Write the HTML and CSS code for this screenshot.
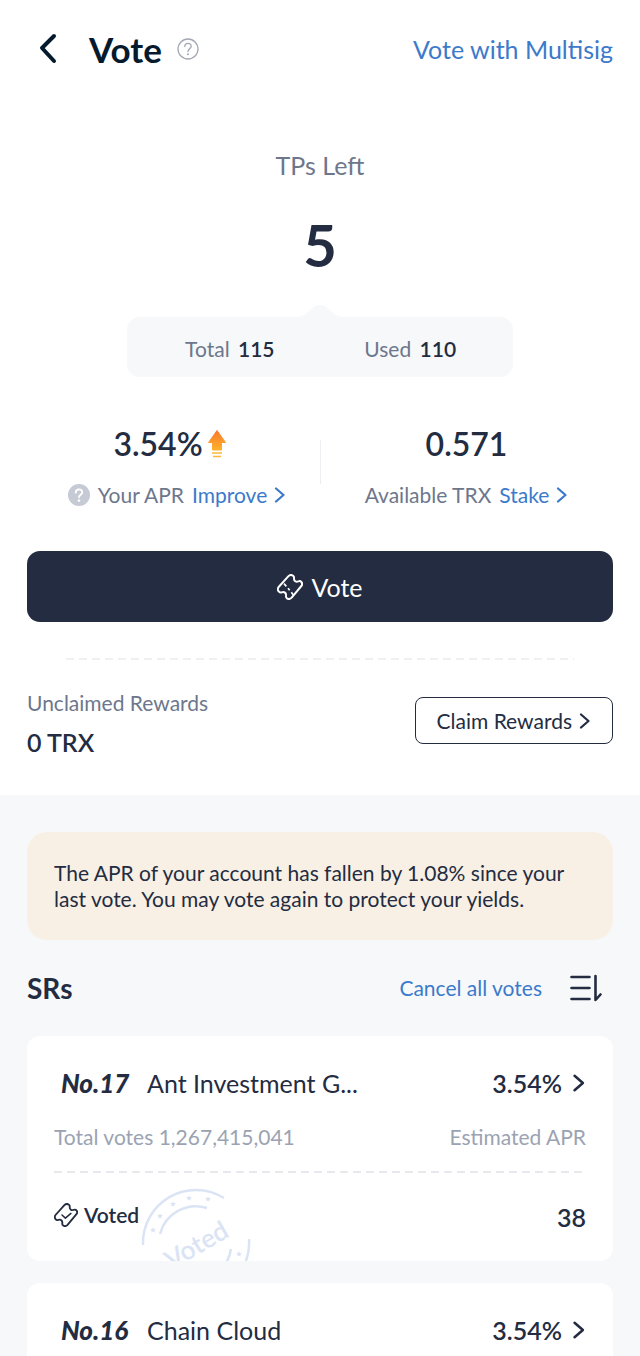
FILE: index.html
```html
<!DOCTYPE html>
<html lang="en">

<head>
    <meta charset="utf-8">
    <meta name="viewport" content="width=device-width, initial-scale=1">
    <title>Vote</title>
    <link rel="stylesheet" href="styles.css">
</head>

<body>
    <!-- shared icons -->
    <svg class="sprite" aria-hidden="true">
        <symbol id="chevron" viewBox="0 0 12 18">
            <path d="M2 2.500L9.500 9L2 15.500" fill="none" stroke="currentColor" stroke-width="2.300" stroke-linecap="round" stroke-linejoin="round" />
        </symbol>
        <symbol id="ticket" viewBox="0 0 78 78">
            <path d="M33 8Q41 -1 49 6Q52 9 51 14C51 21 57 25 64 22Q70 20 73 24Q78 30 73 36L44 71Q37 78 30 73Q26 70 27 65C28 57 22 52 14 55Q8 57 5 52Q0 46 5 39Z" fill="none" stroke="currentColor" stroke-width="6" stroke-linejoin="round" />
        </symbol>
        <symbol id="star" viewBox="0 0 10 10">
            <path d="M5 0L6.300 3.400L10 3.700L7.200 6.100L8.100 9.700L5 7.700L1.900 9.700L2.800 6.100L0 3.700L3.700 3.400Z" fill="currentColor" />
        </symbol>
    </svg>

    <main class="summary">
        <header class="header">
            <button class="back" type="button" aria-label="Back">
                <svg width="20" height="32" viewBox="0 0 20 32"><path d="M17 3L5 15L17 28" fill="none" stroke="currentColor" stroke-width="4" stroke-linecap="round" stroke-linejoin="round" /></svg>
            </button>
            <h1 class="title">Vote</h1>
            <button class="help" type="button" aria-label="Help">
                <svg width="22" height="22" viewBox="0 0 22 22" fill="none" stroke="currentColor">
                    <circle cx="11" cy="11" r="10" stroke-width="1.300" />
                    <path d="M7.800 8.500C7.800 4.400 14.200 4.400 14.200 8.300C14.200 10.700 11 10.600 11 13.500" stroke-width="1.300" stroke-linecap="round" />
                    <circle cx="11" cy="16.200" r="1" fill="currentColor" stroke="none" />
                </svg>
            </button>
            <a class="link multisig" href="#multisig">Vote with Multisig</a>
        </header>

        <section class="left-box">
            <p class="left-label">TPs Left</p>
            <p class="left-value">5</p>
            <svg class="notch" width="48" height="12" viewBox="0 0 48 12"><path d="M0 12C12 12 15 0 24 0C33 0 36 12 48 12Z" fill="currentColor" /></svg>
            <div class="totals">
                <p>Total <b>115</b></p>
                <p>Used <b>110</b></p>
            </div>
        </section>

        <section class="stats">
            <div class="stat stat-apr">
                <p class="stat-value">3.54%
                    <svg class="up" width="20" height="28" viewBox="0 0 20 28">
                        <defs>
                            <linearGradient id="fire" x1="0" y1="0" x2="0" y2="1">
                                <stop offset="0" stop-color="#f9792f" />
                                <stop offset="1" stop-color="#fdb22b" />
                            </linearGradient>
                        </defs>
                        <path d="M10 0.500L18.500 12.500H14.500V20H5.500V12.500H1.500Z" fill="url(#fire)" stroke="url(#fire)" stroke-linejoin="round" />
                        <path d="M5 23H15M6 26.500H14" stroke="#fbb83c" stroke-width="1.500" />
                    </svg>
                </p>
                <p class="stat-label">
                    <svg class="info" width="22" height="22" viewBox="0 0 22 22">
                        <circle cx="11" cy="11" r="11" fill="#c5cad4" />
                        <path d="M7.700 8.700C7.700 4.300 14.300 4.300 14.300 8.300C14.300 10.900 11 10.700 11 13.300" fill="none" stroke="#fff" stroke-width="1.800" stroke-linecap="round" />
                        <circle cx="11" cy="16.600" r="1.300" fill="#fff" />
                    </svg>
                    Your APR
                    <a class="link" href="#improve">Improve <svg class="chevron" width="12" height="18"><use href="#chevron" /></svg></a>
                </p>
            </div>
            <div class="stat">
                <p class="stat-value">0.571</p>
                <p class="stat-label">Available TRX
                    <a class="link" href="#stake">Stake <svg class="chevron" width="12" height="18"><use href="#chevron" /></svg></a>
                </p>
            </div>
        </section>

        <button class="vote-btn" type="button">
            <svg width="26" height="26" viewBox="0 0 78 78">
                <use href="#ticket" />
                <path d="M21 29L28 37M33 43L38 49M43 55L49 63" fill="none" stroke="currentColor" stroke-width="5" />
            </svg>
            Vote
        </button>

        <svg class="dashes rewards-line" height="2"><line x1="0" y1="1" x2="100%" y2="1" /></svg>

        <section class="rewards">
            <div>
                <p class="rewards-label">Unclaimed Rewards</p>
                <p class="rewards-value">0 TRX</p>
            </div>
            <button class="claim-btn" type="button">Claim Rewards <svg class="chevron" width="12" height="18"><use href="#chevron" /></svg></button>
        </section>
    </main>

    <section class="list">
        <p class="notice">The APR of your account has fallen by 1.08% since your last vote. You may vote again to protect your yields.</p>

        <div class="list-head">
            <h2 class="list-title">SRs</h2>
            <a class="link" href="#cancel">Cancel all votes</a>
            <button class="sort" type="button" aria-label="Sort">
                <svg width="34" height="28" viewBox="0 0 34 28" fill="none" stroke="currentColor" stroke-width="2.600" stroke-linecap="round" stroke-linejoin="round">
                    <path d="M2.500 3H20.500M2.500 14H20.500M2.500 25H20.500M26.500 2V26L31.500 20.500" />
                </svg>
            </button>
        </div>

        <article class="card">
            <div class="card-top">
                <span class="rank">No.17</span>
                <h3 class="name">Ant Investment G...</h3>
                <span class="apr">3.54%</span>
                <svg class="chevron" width="14" height="20"><use href="#chevron" /></svg>
            </div>
            <div class="card-sub">
                <span>Total votes 1,267,415,041</span>
                <span>Estimated APR</span>
            </div>
            <svg class="dashes" height="2"><line x1="0" y1="1" x2="100%" y2="1" /></svg>
            <div class="card-foot">
                <span class="voted">
                    <svg width="24" height="24" viewBox="0 0 78 78">
                        <use href="#ticket" />
                        <path d="M26 39L37 49L55 34" fill="none" stroke="currentColor" stroke-width="5" stroke-linecap="round" stroke-linejoin="round" />
                    </svg>
                    Voted
                </span>
                <span class="count">38</span>
            </div>
            <svg class="stamp" width="110" height="110" viewBox="0 0 110 110">
                <g fill="none" stroke="currentColor" stroke-width="2.500">
                    <path d="M2 57A53 53 0 0 1 83 10" />
                    <path d="M19 46A37 37 0 0 1 66 20" />
                    <path d="M108 51A53 53 0 0 1 90 95" />
                    <path d="M90 61A36 36 0 0 1 72 87" />
                </g>
                <use href="#star" x="9" y="39" width="6" height="6" />
                <use href="#star" x="16" y="25" width="6" height="6" />
                <use href="#star" x="29" y="13" width="6" height="6" />
                <use href="#star" x="45" y="7" width="6" height="6" />
                <use href="#star" x="64" y="8" width="6" height="6" />
                <use href="#star" x="95" y="63" width="6" height="6" />
                <text x="56" y="66" text-anchor="middle" transform="rotate(-30 56 58)">Voted</text>
            </svg>
        </article>

        <article class="card">
            <div class="card-top">
                <span class="rank">No.16</span>
                <h3 class="name">Chain Cloud</h3>
                <span class="apr">3.54%</span>
                <svg class="chevron" width="14" height="20"><use href="#chevron" /></svg>
            </div>
        </article>
    </section>
</body>

</html>
```
FILE: styles.css
```css
* {
    box-sizing: border-box;
}

body {
    margin: 0;
    font-family: Lato, "Noto Sans", sans-serif;
    font-size: 21px;
    line-height: 26px;
    color: #232c41;
    background: #f6f8fa;
}

h1, h2, h3, p {
    margin: 0;
}

button {
    padding: 0;
    border: 0;
    background: none;
    font: inherit;
    color: inherit;
    cursor: pointer;
}

svg {
    display: block;
    flex: none;
}

.sprite {
    position: absolute;
    width: 0;
    height: 0;
}

.link {
    color: #3c7acb;
    text-decoration: none;
}

/* top white part */
.summary {
    padding: 0 27px 40px;
    background: #fff;
}

.header {
    display: flex;
    align-items: center;
    height: 97px;
}

.back {
    margin-left: 10px;
    color: #061a2e;
}

.title {
    margin-left: 32px;
    font-size: 35px;
    line-height: 42px;
    font-weight: 700;
    color: #061a2e;
}

.help {
    margin-left: 15px;
    color: #a3a8b4;
}

.multisig {
    margin-left: auto;
    font-size: 25px;
}

.left-box {
    display: flex;
    flex-direction: column;
    align-items: center;
    padding-top: 52px;
}

.left-label {
    font-size: 25px;
    line-height: 32px;
    color: #6d778c;
}

.left-value {
    margin-top: 29px;
    font-size: 58px;
    line-height: 70px;
    font-weight: 700;
}

.notch {
    margin-top: 25px;
    color: #f6f8fa;
}

.totals {
    display: grid;
    grid-template-columns: 1fr 1fr;
    width: 66%;
    padding: 19px 13px 15px;
    border-radius: 13px;
    text-align: center;
    color: #6d778c;
    background: #f6f8fa;
}

.totals b {
    margin-left: 3px;
    font-weight: 600;
    color: #232c41;
}

.stats {
    display: grid;
    grid-template-columns: 1fr 1fr;
    margin-top: 47px;
    background: linear-gradient(#eceef2, #eceef2) center 16px / 1px 44px no-repeat;
}

.stat {
    display: flex;
    flex-direction: column;
    align-items: center;
    gap: 18px;
}

.stat-apr {
    padding-left: 7px;
}

.stat-value {
    display: flex;
    align-items: center;
    font-size: 32px;
    line-height: 40px;
    font-weight: 600;
}

.up {
    margin: 0 14px 0 4px;
}

.stat-label {
    display: flex;
    align-items: center;
    gap: 8px;
    color: #6d778c;
}

.stat-label .link {
    display: flex;
    align-items: center;
    gap: 7px;
}

.vote-btn {
    display: flex;
    align-items: center;
    justify-content: center;
    gap: 8px;
    width: 100%;
    height: 71px;
    margin-top: 43px;
    border-radius: 13px;
    font-size: 25px;
    color: #fff;
    background: #232c41;
}

.dashes {
    width: 100%;
    stroke: #e0e2e7;
    stroke-width: 1.5px;
    stroke-dasharray: 8 5;
}

.rewards-line {
    width: calc(100% - 78px);
    margin: 36px auto 0;
    stroke: #ececef;
}

.rewards {
    display: flex;
    align-items: center;
    justify-content: space-between;
    margin-top: 30px;
}

.rewards-label {
    color: #6d778c;
}

.rewards-value {
    margin-top: 13px;
    font-size: 25px;
    font-weight: 600;
}

.claim-btn {
    display: flex;
    align-items: center;
    gap: 7px;
    height: 47px;
    margin-bottom: 4px;
    padding: 0 21px;
    border: 1px solid #232c41;
    border-radius: 8px;
}

/* SR list */
.list {
    padding: 37px 27px 0;
}

.notice {
    padding: 28px 27px;
    border-radius: 20px;
    background: #f8f0e5;
}

.list-head {
    display: flex;
    align-items: center;
    height: 96px;
}

.list-title {
    margin-right: auto;
    font-size: 28px;
    font-weight: 700;
}

.sort {
    margin: 0 10px 0 27px;
}

.card {
    position: relative;
    margin-bottom: 22px;
    padding: 27px 27px 0;
    border-radius: 13px;
    background: #fff;
    overflow: hidden;
}

.card:last-child {
    margin-bottom: 0;
    padding-bottom: 27px;
}

.card-top {
    display: flex;
    align-items: center;
    height: 40px;
    padding-left: 7px;
    font-size: 25px;
}

.rank {
    width: 86px;
    font-size: 26px;
    font-weight: 900;
    font-style: italic;
}

.name {
    flex: 1;
    font-size: 25px;
    font-weight: 400;
}

.apr {
    margin-right: 10px;
    font-weight: 600;
}

.card-sub {
    display: flex;
    align-items: center;
    justify-content: space-between;
    height: 40px;
    margin: 14px 0;
    color: #9ba3b3;
}

.card-foot {
    display: flex;
    align-items: center;
    justify-content: space-between;
    height: 88px;
}

.voted {
    display: flex;
    align-items: center;
    gap: 6px;
    padding-bottom: 4px;
    font-weight: 600;
}

.count {
    font-size: 25px;
    font-weight: 600;
}

/* stamp lies over the card, cut off by its bottom edge */
.stamp {
    position: absolute;
    left: 114px;
    bottom: -37px;
    color: #dbe4f5;
}

.stamp text {
    font-size: 26px;
    font-weight: 600;
    fill: currentColor;
}
```
